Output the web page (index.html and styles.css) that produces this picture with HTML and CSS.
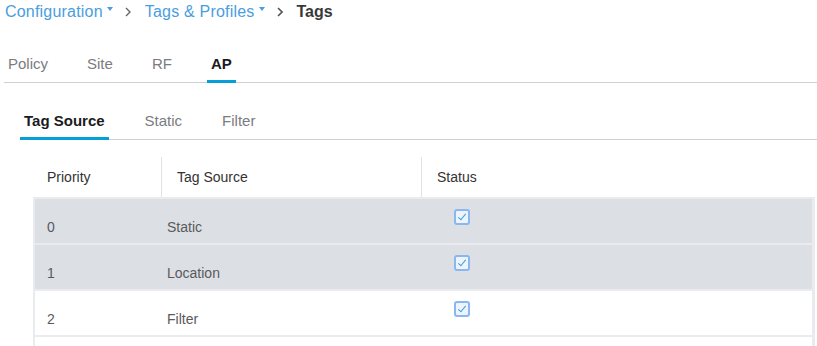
FILE: index.html
```html
<!DOCTYPE html>
<html lang="en">
<head>
  <meta charset="UTF-8" />
  <meta name="viewport" content="width=device-width, initial-scale=1.0"/>
  <title>Tags</title>
  <link rel="stylesheet" href="styles.css">
</head>
<body>

  <div class="breadcrumb">
    <a class="crumb-link" href="#">Configuration</a>
    <svg class="caret" width="6" height="4" viewBox="0 0 6 4"><path d="M0 0h6L3 4z" fill="#4a9de0"/></svg>
    <svg class="chevron" width="6" height="10" viewBox="0 0 6 10"><path d="M1 1l4 4-4 4" fill="none" stroke="#666" stroke-width="1.4"/></svg>
    <a class="crumb-link" href="#">Tags &amp; Profiles</a>
    <svg class="caret" width="6" height="4" viewBox="0 0 6 4"><path d="M0 0h6L3 4z" fill="#4a9de0"/></svg>
    <svg class="chevron" width="6" height="10" viewBox="0 0 6 10"><path d="M1 1l4 4-4 4" fill="none" stroke="#555" stroke-width="1.6"/></svg>
    <span class="crumb-current">Tags</span>
  </div>

  <div class="tabs main-tabs">
    <div class="tab">Policy</div>
    <div class="tab">Site</div>
    <div class="tab">RF</div>
    <div class="tab active">AP</div>
  </div>

  <div class="tabs sub-tabs">
    <div class="tab active">Tag Source</div>
    <div class="tab">Static</div>
    <div class="tab">Filter</div>
  </div>

  <div class="grid">
    <div class="grid-head">
      <div class="cell col-priority">Priority</div>
      <div class="cell col-source">Tag Source</div>
      <div class="cell col-status">Status</div>
    </div>
    <div class="grid-body">
      <div class="row selected">
        <div class="cell col-priority">0</div>
        <div class="cell col-source">Static</div>
        <div class="cell col-status"><span class="check"></span></div>
      </div>
      <div class="row selected">
        <div class="cell col-priority">1</div>
        <div class="cell col-source">Location</div>
        <div class="cell col-status"><span class="check"></span></div>
      </div>
      <div class="row">
        <div class="cell col-priority">2</div>
        <div class="cell col-source">Filter</div>
        <div class="cell col-status"><span class="check"></span></div>
      </div>
      <div class="row"></div>
    </div>
  </div>

</body>
</html>
```

FILE: styles.css
```css
* {
  box-sizing: border-box;
}

body {
  font-family: "Liberation Sans", Arial, sans-serif;
  background: #fff;
  color: #333;
  margin: 0;
  padding: 0;
  overflow: hidden;
}

.breadcrumb {
  display: flex;
  align-items: center;
  height: 24px;
  padding-left: 5px;
  font-size: 16px;
}

.crumb-link {
  color: #4a9de0;
  text-decoration: none;
  letter-spacing: 0.2px;
}

.caret {
  margin: 0 0 6px 4px;
}

.chevron {
  margin: 0 14px 0 12px;
}

.crumb-current {
  font-weight: bold;
  color: #39393b;
}

.tabs {
  display: flex;
  gap: 32px;
  border-bottom: 1px solid #cfd0d4;
  font-size: 15px;
}

.main-tabs {
  margin: 31px 0 0 4px;
  gap: 31px;
}

.sub-tabs {
  margin: 29px 0 0 20px;
}

.tab {
  padding: 0 4px 7px;
  line-height: 18px;
  color: #7b7b80;
  border-bottom: 3px solid transparent;
  margin-bottom: -1px;
}

.tab.active {
  color: #1b1b1d;
  font-weight: bold;
  border-bottom-color: #049fd9;
}

.grid {
  margin: 17px 2px 0 33px;
  font-size: 14px;
}

.grid-head {
  display: flex;
  height: 40px;
  align-items: stretch;
}

.grid-head .cell {
  display: flex;
  align-items: center;
  color: #333;
}

.grid-head .col-priority {
  width: 128px;
  padding-left: 14px;
}

.grid-head .col-source {
  width: 260px;
  padding-left: 15px;
}

.grid-head .col-status {
  flex: 1;
  padding-left: 15px;
}

.grid-head .col-source,
.grid-head .col-status {
  border-left: 1px solid #e2e2e4;
}

.grid-body {
  background: #e9ebee;
  padding: 2px 3px 0 2px;
  display: flex;
  flex-direction: column;
  gap: 2px;
}

.row {
  display: flex;
  height: 44px;
  background: #fff;
  color: #5a5a5c;
}

.row.selected {
  background: #dcdfe3;
}

.row .cell {
  padding-top: 19px;
  line-height: 18px;
}

.row .col-priority {
  width: 120px;
  padding-left: 12px;
}

.row .col-source {
  width: 254px;
  padding-left: 12px;
}

.row .col-status {
  flex: 1;
  padding: 10px 0 0 45px;
}

.check {
  display: block;
  width: 16px;
  height: 16px;
  border: 2px solid #8ab6f2;
  border-radius: 3px;
  background: #eef4fc;
  position: relative;
}

.check::after {
  content: "";
  position: absolute;
  left: 4px;
  top: 1px;
  width: 3px;
  height: 7px;
  border: solid #3ba2de;
  border-width: 0 1.5px 1.5px 0;
  transform: rotate(40deg);
}
```
